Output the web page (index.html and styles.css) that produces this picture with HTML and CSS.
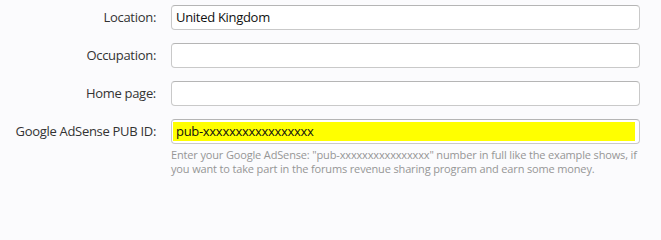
FILE: index.html
```html
<!DOCTYPE html>
<html>
<head>
<meta charset="utf-8">
<link rel="stylesheet" href="styles.css">
</head>
<body>
<form class="form">
  <div class="row">
    <label class="label">Location:</label>
    <div class="field"><div class="input">United Kingdom</div></div>
  </div>
  <div class="row">
    <label class="label">Occupation:</label>
    <div class="field"><div class="input"></div></div>
  </div>
  <div class="row">
    <label class="label">Home page:</label>
    <div class="field"><div class="input"></div></div>
  </div>
  <div class="row">
    <label class="label">Google AdSense PUB ID:</label>
    <div class="field">
      <div class="input input-hl"><span class="hl">pub-xxxxxxxxxxxxxxxxx</span></div>
      <p class="help">Enter your Google AdSense: "pub-xxxxxxxxxxxxxxxx" number in full like the example shows, if you want to take part in the forums revenue sharing program and earn some money.</p>
    </div>
  </div>
</form>
</body>
</html>
```
FILE: styles.css
```css
html, body {
  margin: 0;
  padding: 0;
  background: #fbfbfd;
}
body {
  font-family: "Open Sans", "DejaVu Sans", sans-serif;
  font-size: 13px;
  letter-spacing: -0.3px;
  color: #222;
}
.form {
  padding-top: 5px;
  display: flex;
  flex-direction: column;
  gap: 13px;
}
.row {
  display: grid;
  grid-template-columns: 156px 469px;
  column-gap: 15px;
  align-items: start;
}
.label {
  text-align: right;
  line-height: 25px;
  color: #333;
}
.input {
  box-sizing: border-box;
  height: 25px;
  border: 1px solid #c9c9c9;
  border-top-color: #b5b5b5;
  border-radius: 4px;
  background: #fff;
  padding: 0 4px;
  line-height: 23px;
  color: #111;
}
.input-hl {
  padding: 2px 4px 2px 1px;
  line-height: 19px;
}
.hl {
  display: block;
  background: #ffff00;
  padding-left: 3px;
  height: 19px;
}
.help {
  margin: 4px 0 0;
  font-size: 11px;
  letter-spacing: -0.15px;
  line-height: 14px;
  color: #969696;
}
```
